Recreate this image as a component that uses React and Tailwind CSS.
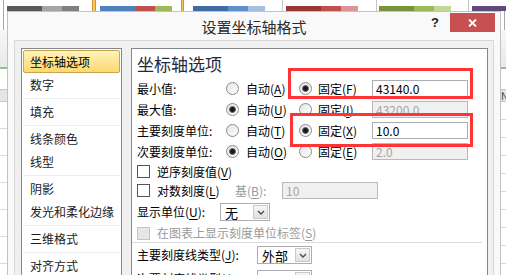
import React from "react";

function Key({ k }) {
  return (
    <>
      (<span className="underline underline-offset-[2px]">{k}</span>)
    </>
  );
}

function Radio({ checked }) {
  return (
    <span className="flex h-[13px] w-[13px] shrink-0 items-center justify-center rounded-full border border-[#8a8a8a] bg-gradient-to-br from-[#e4e4e4] to-white">
      {checked ? (
        <span className="h-[7px] w-[7px] rounded-full border border-[#6b6b6b] bg-[#1a1a1a]" />
      ) : null}
    </span>
  );
}

function Check({ disabled }) {
  return (
    <span
      className={
        disabled
          ? "h-[13px] w-[13px] shrink-0 border border-[#c4c4c4] bg-[#e6e6e6]"
          : "h-[13px] w-[13px] shrink-0 border border-[#555] bg-white"
      }
    />
  );
}

function TextBox({ value, disabled, width = "w-[96px]" }) {
  return (
    <div
      className={
        (disabled
          ? "border-[#b9b9b9] bg-[#f0f0f0] text-[#a6a6a6] "
          : "border-[#abadb3] bg-white text-black ") +
        width +
        " flex h-[17px] items-center border pl-[3px] text-[12px] leading-none"
      }
    >
      {value}
    </div>
  );
}

function Select({ value, width }) {
  return (
    <div className={width + " flex h-[18px] items-center border border-[#abadb3] bg-white"}>
      <span className="flex-1 pl-[4px] text-[13px] leading-none">{value}</span>
      <span className="mr-[1px] flex h-[14px] w-[15px] items-center justify-center border border-[#c9c9c9] bg-gradient-to-b from-[#f6f6f6] to-[#e2e2e2]">
        <svg width="8" height="5" viewBox="0 0 8 5">
          <path d="M1 1 L4 4 L7 1" fill="none" stroke="#4a4a4a" strokeWidth="1.4" />
        </svg>
      </span>
    </div>
  );
}

const navItems = [
  { label: "坐标轴选项", selected: true },
  { label: "数字", sep: true },
  { label: "填充", sep: true },
  { label: "线条颜色" },
  { label: "线型", sep: true },
  { label: "阴影" },
  { label: "发光和柔化边缘", sep: true },
  { label: "三维格式", sep: true },
  { label: "对齐方式" },
];

const scaleRows = [
  { label: "最小值:", auto: <Key k="A" />, fixed: <Key k="F" />, fixedOn: true, value: "43140.0" },
  { label: "最大值:", auto: <Key k="U" />, fixed: <Key k="I" />, fixedOn: false, value: "43200.0" },
  { label: "主要刻度单位:", auto: <Key k="T" />, fixed: <Key k="X" />, fixedOn: true, value: "10.0" },
  { label: "次要刻度单位:", auto: <Key k="O" />, fixed: <Key k="E" />, fixedOn: false, value: "2.0" },
];

function SheetStrip({ side }) {
  const rows = side === "left" ? [0, 1, 2, 3, 4, 5, 6] : [0, 1, 2, 3, 4, 5, 6, 7, 8];
  return (
    <div className="flex w-full flex-col">
      <div className="h-[19px] border-l border-[#a8a8a8] ml-[3px]" />
      <div className="h-[37px] bg-gradient-to-b from-[#f7f7f7] to-[#e9e9e9]" />
      <div className="h-[2px] bg-[#8fc28f]" />
      <div className="h-[20px] bg-white" />
      <div className="flex h-[13px] items-center border-y border-[#c6c6c6] bg-[#e4e4e4] text-[10px] leading-none text-[#444]">
        {side === "right" ? "N" : ""}
      </div>
      {rows.map((r) => (
        <div
          key={r}
          className={
            side === "left"
              ? "h-[27px] border-b border-[#d8d8d8] bg-white"
              : "h-[18px] border-b border-[#d8d8d8] bg-white"
          }
        />
      ))}
    </div>
  );
}

export default function App() {
  return (
    <div className="relative h-[275px] w-[506px] overflow-hidden bg-white font-['Noto_Sans_CJK_SC',sans-serif] text-black">
      {/* spreadsheet behind the dialog */}
      <div className="flex h-[11px] items-end">
        <span className="h-[11px] w-[7px] self-stretch pl-[3px]">
          <span className="block h-full w-px bg-[#a8a8a8]" />
        </span>
        <span className="h-[5px] w-[35px] bg-[#595959]" />
        <span className="h-[5px] w-[20px] bg-[#a5a5a5]" />
        <span className="h-[5px] w-[17px] bg-[#7f7f7f]" />
        <span className="w-[13px]" />
        <span className="h-[11px] w-[4px] border-x border-[#c9962f] bg-[#f7c95a]" />
        <span className="w-[4px]" />
        <span className="h-[5px] w-[35px] bg-[#4f81bd]" />
        <span className="h-[5px] w-[20px] bg-[#c0504d]" />
        <span className="h-[5px] w-[17px] bg-[#9bbb59]" />
        <span className="w-[9px]" />
        <span className="h-[11px] w-[3px] border-x border-[#c9962f] bg-[#f7c95a]" />
        <span className="w-[9px]" />
        <span className="h-[5px] w-[35px] bg-[#3f6ca6]" />
        <span className="h-[5px] w-[20px] bg-[#5f8fcb]" />
        <span className="h-[5px] w-[17px] bg-[#a7bfdf]" />
        <span className="w-[17px]" />
        <span className="h-[11px] w-px bg-[#c8c8c8]" />
        <span className="w-[3px]" />
        <span className="h-[5px] w-[35px] bg-[#953735]" />
        <span className="h-[5px] w-[20px] bg-[#c0504d]" />
        <span className="h-[5px] w-[17px] bg-[#d99694]" />
        <span className="w-[18px]" />
        <span className="h-[11px] w-px bg-[#c8c8c8]" />
        <span className="w-[2px]" />
        <span className="h-[5px] w-[35px] bg-[#77933c]" />
        <span className="h-[5px] w-[20px] bg-[#9bbb59]" />
        <span className="h-[5px] w-[17px] bg-[#c3d69b]" />
        <span className="w-[17px]" />
        <span className="h-[11px] w-px bg-[#c8c8c8]" />
        <span className="w-[3px]" />
        <span className="h-[5px] flex-1 bg-[#604a7b]" />
      </div>
      <div className="flex justify-between">
        <div className="w-[7px]">
          <SheetStrip side="left" />
        </div>
        <div className="w-[5px]">
          <SheetStrip side="right" />
        </div>
      </div>

      {/* dialog window */}
      <div className="absolute left-[7px] top-[11px] flex h-[290px] w-[494px] flex-col border border-[#c2c2c2] bg-[#f9f9f9]">
        <div className="grid h-[28px] shrink-0 grid-cols-[1fr_auto_1fr]">
          <div />
          <div className="pt-[6px] text-[15px] leading-[18px] text-[#2a2a2a]">设置坐标轴格式</div>
          <div className="flex items-start justify-end pr-[5px]">
            <span className="mr-[11px] mt-[4px] font-['Liberation_Sans',sans-serif] text-[13px] font-bold leading-[14px] text-[#222]">
              ?
            </span>
            <span className="mt-[1px] flex h-[19px] w-[45px] items-center justify-center bg-[#c75050]">
              <svg width="9" height="8" viewBox="0 0 9 8">
                <path d="M1 0.5 L8 7.5 M8 0.5 L1 7.5" stroke="white" strokeWidth="1.8" />
              </svg>
            </span>
          </div>
        </div>

        <div className="ml-[6px] flex w-[480px] flex-1 gap-[9px] border border-[#d7d7d7] bg-[#f0f0f0] pl-[6px] pr-[5px] pt-[7px]">
          {/* category list */}
          <div className="w-[101px] shrink-0 border border-[#828790] bg-white p-px">
            {navItems.map((item) => (
              <React.Fragment key={item.label}>
                {item.selected ? (
                  <div className="flex h-[23px] items-center rounded-[2px] border border-[#c7a552] bg-gradient-to-b from-[#fff2b8] to-[#fdd86e] pl-[6px] text-[12px] leading-none">
                    {item.label}
                  </div>
                ) : (
                  <div className="flex h-[23px] items-center pl-[7px] text-[12px] leading-none text-[#1a1a1a]">
                    {item.label}
                  </div>
                )}
                {item.sep ? (
                  <div className="flex h-[4px] items-center">
                    <div className="h-px w-full bg-[#eceef2]" />
                  </div>
                ) : null}
              </React.Fragment>
            ))}
          </div>

          {/* options panel */}
          <div className="relative flex-1 border border-[#828790] bg-white pl-[5px] text-[12px]">
            <div className="h-[29px] pt-[4px] text-[17px] leading-[21px] text-[#1f2b3f]">坐标轴选项</div>

            {scaleRows.map((row) => (
              <div key={row.label} className="flex h-[21px] items-center">
                <span className="w-[89px] leading-none">{row.label}</span>
                <Radio checked={!row.fixedOn} />
                <span className="w-[60px] pl-[7px] leading-none">自动{row.auto}</span>
                <Radio checked={row.fixedOn} />
                <span className="w-[60px] pl-[6px] leading-none">固定{row.fixed}</span>
                <TextBox value={row.value} disabled={!row.fixedOn} />
              </div>
            ))}

            <div className="flex h-[19px] items-center gap-[7px]">
              <Check />
              <span className="leading-none">逆序刻度值<Key k="V" /></span>
            </div>
            <div className="flex h-[19px] items-center">
              <Check />
              <span className="w-[85px] pl-[7px] leading-none">对数刻度<Key k="L" /></span>
              <span className="w-[47px] leading-none text-[#9a9a9a]">基<Key k="B" />:</span>
              <TextBox value="10" disabled />
            </div>
            <div className="flex h-[24px] items-center">
              <span className="w-[83px] leading-none">显示单位<Key k="U" />:</span>
              <Select value="无" width="w-[50px]" />
            </div>
            <div className="flex h-[18px] items-center gap-[7px]">
              <Check disabled />
              <span className="leading-none text-[#9a9a9a]">在图表上显示刻度单位标签<Key k="S" /></span>
            </div>
            <div className="-ml-[5px] h-px w-[350px] bg-[#dcdcdc]" />
            <div className="flex h-[24px] items-center">
              <span className="w-[120px] leading-none">主要刻度线类型<Key k="J" />:</span>
              <Select value="外部" width="w-[55px]" />
            </div>
            <div className="flex h-[24px] items-center">
              <span className="w-[120px] leading-none">次要刻度线类型<Key k="I" />:</span>
              <Select value="无" width="w-[55px]" />
            </div>

            {/* red highlight annotations */}
            <div className="pointer-events-none absolute left-[156px] top-[19px] h-[31px] w-[185px] border-[3px] border-[#ff3434]" />
            <div className="pointer-events-none absolute left-[158px] top-[64px] h-[34px] w-[183px] border-[3px] border-[#ff3434]" />
          </div>
        </div>
      </div>
    </div>
  );
}
